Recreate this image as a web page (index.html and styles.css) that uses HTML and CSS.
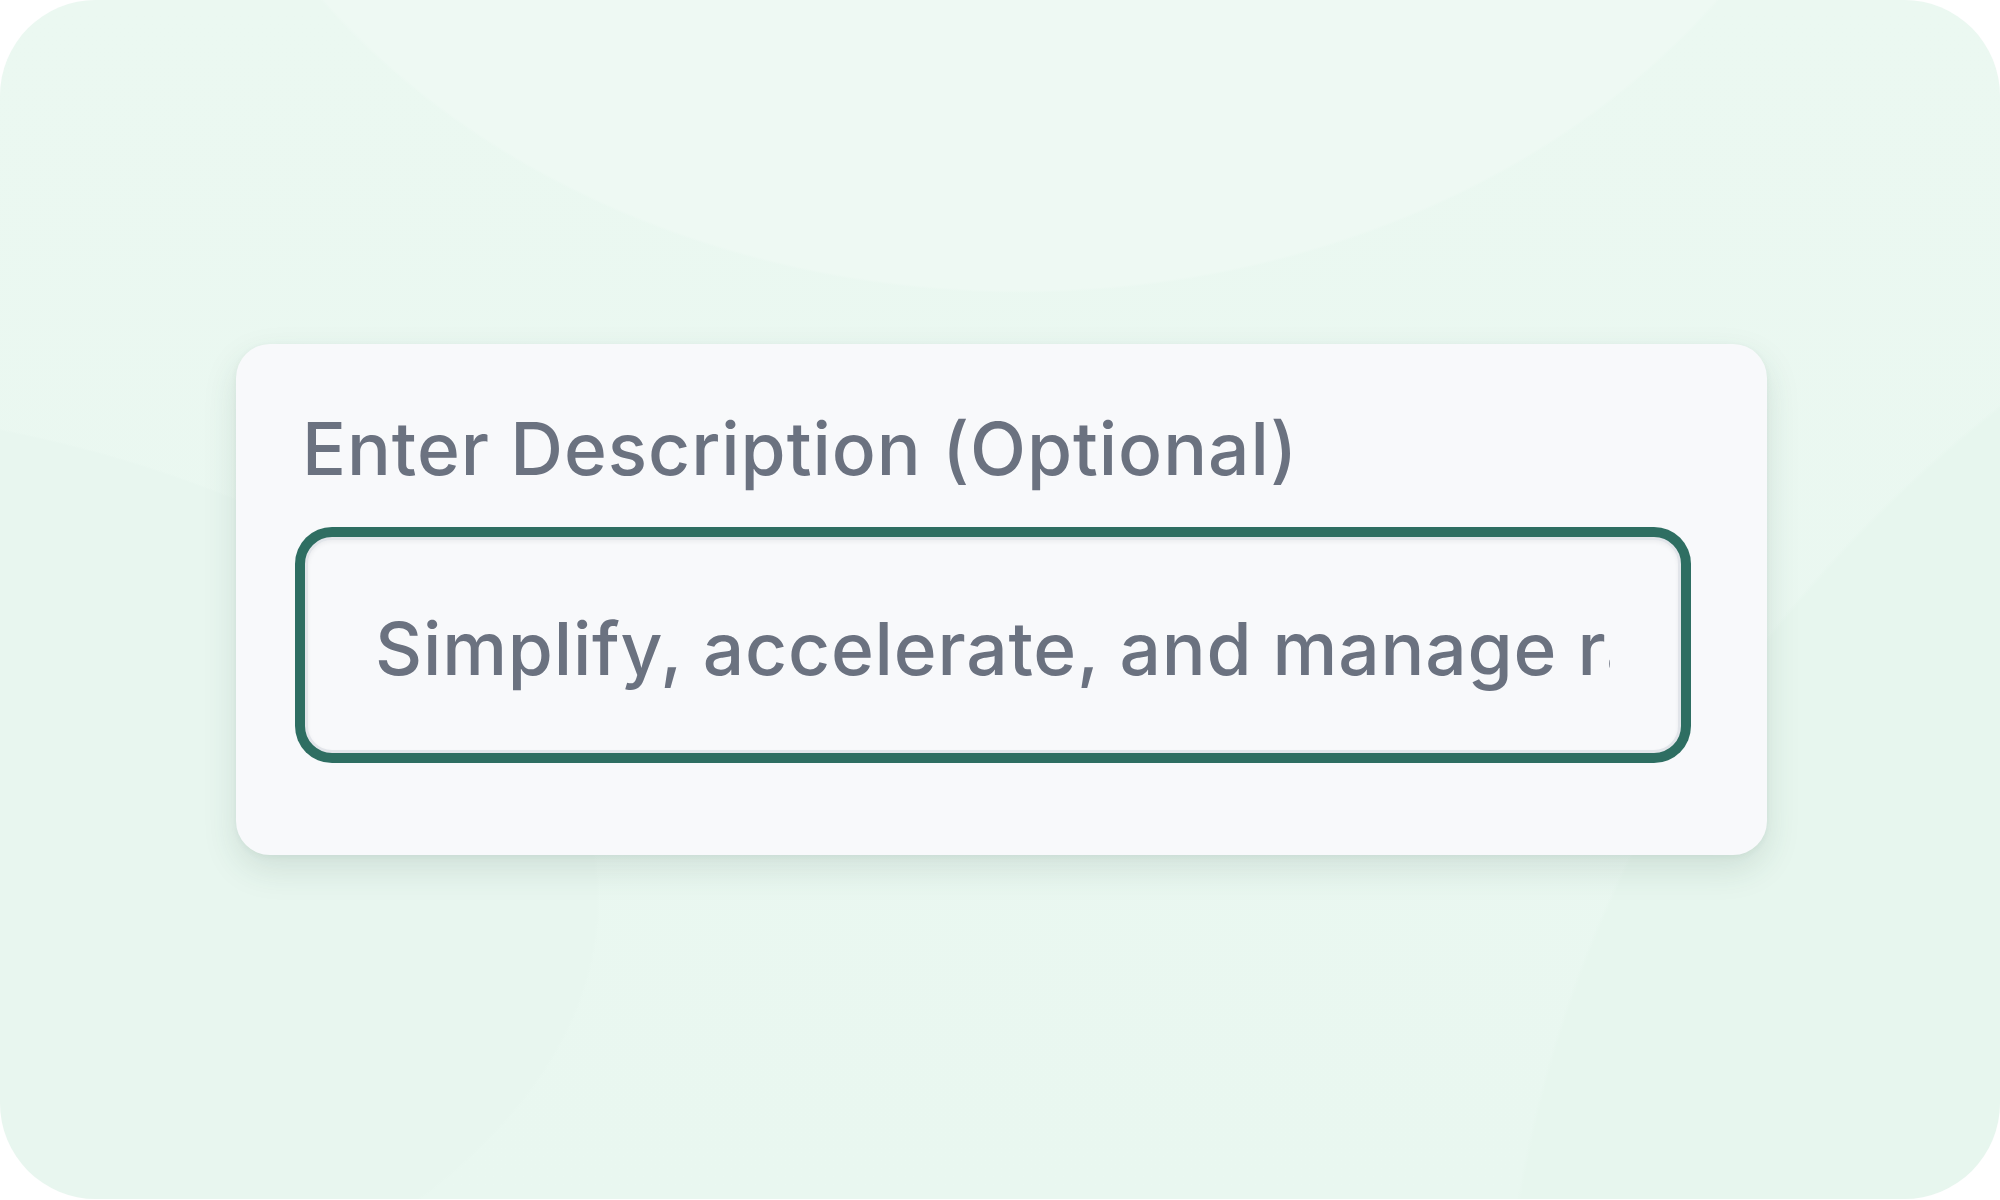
FILE: index.html
```html
<!DOCTYPE html>
<html lang="en">
<head>
<meta charset="utf-8">
<title>Enter Description</title>
<link rel="stylesheet" href="styles.css">
</head>
<body>
<main class="stage">
  <section class="card">
    <label class="field-label" for="desc">Enter Description (Optional)</label>
    <input class="field-input" id="desc" type="text" value="Simplify, accelerate, and manage rating and quoting" readonly>
  </section>
</main>
</body>
</html>
```

FILE: styles.css
```css
html, body {
  margin: 0;
  padding: 0;
  background: #ffffff;
}

body {
  width: 2000px;
  height: 1200px;
  overflow: hidden;
  font-family: "Inter", "Liberation Sans", sans-serif;
}

.stage {
  box-sizing: border-box;
  width: 2000px;
  height: 1199px;
  border-radius: 96px;
  overflow: hidden;
  padding: 344px 233px 0 236px;
  background:
    radial-gradient(ellipse 860px 700px at 1020px -407px, #eef9f3 99.6%, rgba(238,249,243,0) 100%),
    radial-gradient(ellipse 1400px 1300px at 2900px 1400px, #e7f6ee 99.7%, rgba(231,246,238,0) 100%),
    radial-gradient(ellipse 900px 500px at -300px 900px, #e8f6ef 99.6%, rgba(232,246,239,0) 100%),
    linear-gradient(180deg, #ebf8f1 0%, #e9f7f0 100%);
}

.card {
  box-sizing: border-box;
  width: 1531px;
  height: 511px;
  background: #f8f9fb;
  border-radius: 34px;
  padding: 61px 86px 0 69px;
  display: flex;
  flex-direction: column;
  box-shadow: 0 14px 34px rgba(40, 80, 60, 0.13), 0 2px 6px rgba(40, 80, 60, 0.05);
}

.field-label {
  display: block;
  font-size: 73px;
  line-height: 88px;
  color: #6b7280;
  font-weight: 500;
  letter-spacing: 0.95px;
  margin-left: -3px;
}

.field-input {
  box-sizing: border-box;
  margin-top: 44px;
  width: 1376px;
  height: 216px;
  padding: 6px 68px 0 67px;
  border: 3px solid #e2e5ea;
  border-radius: 27px;
  background: #f8f9fb;
  font-family: "Inter", "Liberation Sans", sans-serif;
  font-size: 73px;
  font-weight: 500;
  letter-spacing: 0.8px;
  color: #6b7280;
  outline: none;
  box-shadow: 0 0 0 10px #2e6e62, inset 0 2px 4px rgba(0, 0, 0, 0.05);
}
```
